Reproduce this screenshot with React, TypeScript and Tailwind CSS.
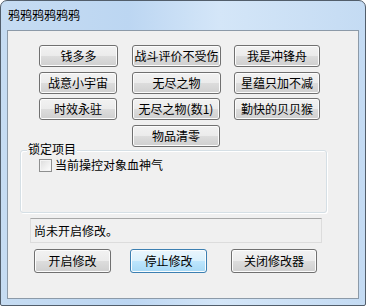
import React from "react";

const font = { fontFamily: '"Noto Sans CJK SC", "Noto Sans", sans-serif' };

function Btn({ label, w, focused }: { label: string; w: string; focused?: boolean }) {
  return (
    <button
      className={
        (focused
          ? "border-[#3c7fb1] bg-[linear-gradient(#eaf6fd_0%,#d9f0fc_50%,#bee6fd_50%,#a7d9f5_100%)] shadow-[inset_0_0_0_1px_#fbfdfe]"
          : "border-[#707070] bg-[linear-gradient(#f2f2f2_0%,#ebebeb_50%,#dddddd_50%,#cfcfcf_100%)] shadow-[inset_0_0_0_1px_#fcfcfc]") +
        " h-full rounded-[3px] border text-[12px] leading-none text-black flex items-center justify-center whitespace-nowrap " +
        w
      }
    >
      {label}
    </button>
  );
}

export default function App() {
  return (
    <div className="w-[366px] h-[306px] bg-white" style={font}>
      <div className="w-[366px] h-[306px] flex flex-col rounded-t-[7px] rounded-b-[2px] border border-[#525e6b] bg-[linear-gradient(90deg,#c6dcf2_0%,#bcd6f2_35%,#d4e6f8_60%,#c4dbf3_100%)]">
        <div className="h-[29px] pl-[7px] pt-[6px] text-[12px] leading-[16px] text-black">
          鸦鸦鸦鸦鸦鸦
        </div>
        <div className="mx-[6px] mb-[6px] flex-1 border border-[#8c9aa8] bg-[#f0f0f0] flex flex-col">
          <div className="ml-[31px] mt-[14px] grid grid-cols-[80px_89px_86px] auto-rows-[22px] gap-x-[13px] gap-y-[4.7px]">
            <Btn label="钱多多" w="w-[79px]" />
            <Btn label="战斗评价不受伤" w="w-[89px]" />
            <Btn label="我是冲锋舟" w="w-[86px]" />
            <Btn label="战意小宇宙" w="w-[78px]" />
            <Btn label="无尽之物" w="w-[89px]" />
            <Btn label="星蕴只加不减" w="w-[86px]" />
            <Btn label="时效永驻" w="w-[78px]" />
            <Btn label="无尽之物(数1)" w="w-[88px]" />
            <Btn label="勤快的贝贝猴" w="w-[86px]" />
            <div className="col-start-2">
              <Btn label="物品清零" w="w-[88px]" />
            </div>
          </div>

          <div className="relative ml-[12px] mt-[3px] w-[307px] h-[63px] rounded-[3px] border border-[#d5dfe5] shadow-[inset_1px_1px_0_#ffffff,1px_1px_0_#ffffff]">
            <div className="absolute left-[6px] -top-[9px] bg-[#f0f0f0] px-[1px] text-[12px] leading-[14px] text-black">
              锁定项目
            </div>
            <label className="ml-[18px] mt-[7px] flex items-center gap-[3px] text-[12px] leading-[14px] text-black">
              <span className="w-[13px] h-[13px] border border-[#8e8f8f] bg-[linear-gradient(135deg,#dcdcdc,#fefefe)] shadow-[inset_0_0_0_1px_#f4f4f4]" />
              当前操控对象血神气
            </label>
          </div>

          <div className="ml-[22px] mt-[5px] w-[292px] h-[25px] border border-[#dcdcdc] border-t-[#a8a8a8] flex items-center pl-[3px] text-[12px] text-black">
            尚未开启修改。
          </div>

          <div className="ml-[26px] mt-[6px] h-[24px] flex">
            <Btn label="开启修改" w="w-[77px]" />
            <div className="ml-[19px] h-full">
              <Btn label="停止修改" w="w-[77px]" focused />
            </div>
            <div className="ml-[24px] h-full">
              <Btn label="关闭修改器" w="w-[86px]" />
            </div>
          </div>
        </div>
      </div>
    </div>
  );
}
